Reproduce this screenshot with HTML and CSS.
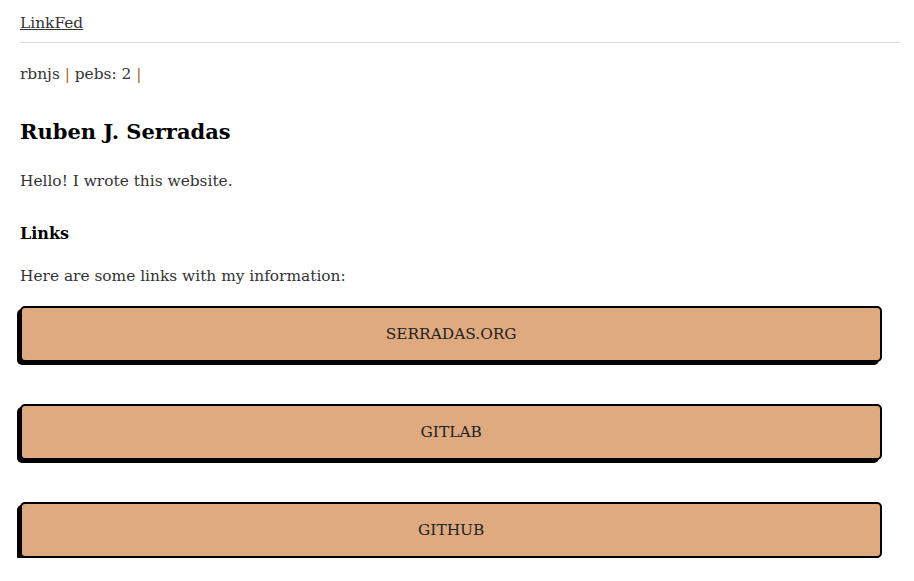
FILE: index.html
```html
<!DOCTYPE html>
<html>
<head>
<meta charset="utf-8">
<title>LinkFed</title>
<link rel="stylesheet" href="styles.css">
</head>
<body>
<div class="page">
  <header class="top">
    <a class="brand" href="#">LinkFed</a>
  </header>
  <p class="meta">rbnjs <span class="sep">|</span> pebs: 2 <span class="sep">|</span></p>
  <h1 class="name">Ruben J. Serradas</h1>
  <p class="text intro">Hello! I wrote this website.</p>
  <h3 class="section">Links</h3>
  <p class="text lead">Here are some links with my information:</p>
  <div class="links">
    <a class="btn" href="#">SERRADAS.ORG</a>
    <a class="btn" href="#">GITLAB</a>
    <a class="btn" href="#">GITHUB</a>
  </div>
</div>
</body>
</html>
```
FILE: styles.css
```css
html, body {
  margin: 0;
  padding: 0;
  background: #fff;
}
body {
  font-family: "DejaVu Serif", "Liberation Serif", serif;
  font-size: 15.4px;
  color: #333;
}
.page {
  padding: 0 14px 0 20px;
}
.top {
  padding: 14px 0 10px;
  border-bottom: 1px solid #ddd;
}
.brand {
  color: #333;
  text-decoration: underline;
}
.meta {
  margin: 19px 0 0;
  line-height: 24px;
}
.sep {
  color: #a3652f;
}
.name {
  margin: 31px 0 0;
  font-size: 21px;
  line-height: 30px;
  color: #000;
}
.text {
  line-height: 24px;
}
.intro {
  margin: 22px 0 0;
}
.section {
  margin: 29px 0 0;
  font-size: 16px;
  line-height: 24px;
  color: #000;
}
.lead {
  margin: 18px 0 0;
}
.links {
  margin-top: 18px;
  display: flex;
  flex-direction: column;
  gap: 42px;
}
.btn {
  display: block;
  width: 98%;
  box-sizing: border-box;
  background: #dfaa80;
  border: 2px solid #000;
  border-radius: 5px;
  box-shadow: -3px 3px 0 #000;
  padding: 16px 0;
  text-align: center;
  color: #222;
  text-decoration: none;
  line-height: 20px;
}
```
